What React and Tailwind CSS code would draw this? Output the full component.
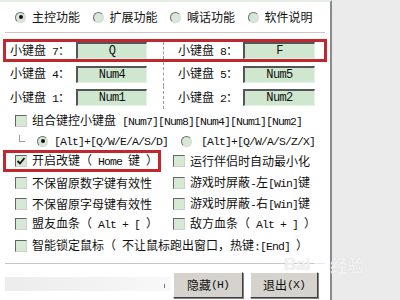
import React from 'react';

const M = ({ children }) => (
  <span className="font-['Liberation_Mono'] text-[11.5px] tracking-[-0.9px]">{children}</span>
);

const Radio = ({ on }) => (
  <span className="flex w-[11px] h-[11px] shrink-0 items-center justify-center rounded-full bg-[#d6e9d5] border border-t-[#6f6f6f] border-l-[#6f6f6f] border-r-[#d8d8d8] border-b-[#d8d8d8]">
    {on && <span className="w-[4px] h-[4px] rounded-full bg-[#111]" />}
  </span>
);

const Check = ({ on }) => (
  <span className="flex w-[12px] h-[12px] shrink-0 items-center justify-center bg-[#d6e9d4] border border-t-[#646464] border-l-[#646464] border-r-[#cfcfcf] border-b-[#cfcfcf]">
    {on && (
      <svg width="10" height="10" viewBox="0 0 10 10">
        <path d="M1.5 5 L4 7.5 L8.5 2" fill="none" stroke="#111" strokeWidth="1.8" />
      </svg>
    )}
  </span>
);

const Field = ({ value, w }) => (
  <div className={`${w} h-[17px] flex items-center justify-center bg-[#cfe6cf] border-t-2 border-l-2 border-t-[#555] border-l-[#555] border-r border-b border-r-[#e6f1e6] border-b-[#e6f1e6]`}>
    <span className="font-['Liberation_Mono'] text-[12px] tracking-[-0.6px]">{value}</span>
  </div>
);

const KeyCells = ({ l, lv, r, rv }) => (
  <>
    <div className="w-[157px] pl-[4px] flex items-center">
      <span className="w-[66px]">小键盘<M> {l}</M>：</span>
      <Field value={lv} w="w-[71px]" />
    </div>
    <div className="flex-1 h-full pl-[14px] flex items-center border-l border-dashed border-[#9c9c9c]">
      <span className="w-[65px]">小键盘<M> {r}</M>：</span>
      <Field value={rv} w="w-[72px]" />
    </div>
  </>
);

const Opt = ({ on, children }) => (
  <div className="flex items-center gap-[5px]">
    <Check on={on} />
    <span className="whitespace-nowrap">{children}</span>
  </div>
);

const Row2 = ({ h, red, left, right }) => (
  <div className={`flex mx-[3px] ${h}`}>
    <div className={`w-[158px] pl-[9px] flex items-center border-[3px] ${red ? 'border-[#c1272d]' : 'border-transparent'}`}>
      {left}
    </div>
    <div className="pl-[12px] flex items-center">{right}</div>
  </div>
);

export default function App() {
  const tabs = [
    ['主控功能', true],
    ['扩展功能', false],
    ['喊话功能', false],
    ['软件说明', false],
  ];

  return (
    <div className="w-[400px] h-[300px] flex overflow-hidden bg-[#ebebeb] text-[12px] leading-none text-[#111] font-['Noto_Sans_CJK_SC',sans-serif] relative">
      <div className="w-[332px] h-full bg-white border-r-2 border-[#8a8a8a] flex flex-col border-t-2 border-t-[#e3ede3]">
        {/* tabs */}
        <div className="h-[30px] pl-[15px] flex items-center">
          {tabs.map(([t, on]) => (
            <div key={t} className="w-[77.5px] flex items-center gap-[6px]">
              <Radio on={on} />
              <span>{t}</span>
            </div>
          ))}
        </div>
        <div className="h-px mx-[5px] bg-[#c6c6c6]" />

        {/* keypad */}
        <div className="mt-[6px] mx-[3px] h-[23px] flex items-center border-[3px] border-[#c1272d]">
          <KeyCells l="7" lv="Q" r="8" rv="F" />
        </div>
        <div className="mx-[3px] px-[3px] h-[24px] flex items-center">
          <KeyCells l="4" lv="Num4" r="5" rv="Num5" />
        </div>
        <div className="mx-[3px] px-[3px] h-[23px] flex items-center">
          <KeyCells l="1" lv="Num1" r="2" rv="Num2" />
        </div>

        {/* combo */}
        <div className="h-[24px] pl-[15px] flex items-center">
          <Opt>
            组合键控小键盘<M> [Num7][Num8][Num4][Num1][Num2]</M>
          </Opt>
        </div>
        <div className="h-[16px] pl-[19px] flex items-center">
          <span className="w-[6px] h-[7px] mb-[6px] border-l border-b border-[#9a9a9a]" />
          <span className="ml-[12px]"><Radio on /></span>
          <span className="ml-[6px]"><M>[Alt]+[Q/W/E/A/S/D]</M></span>
          <span className="ml-[13px]"><Radio /></span>
          <span className="ml-[9px]"><M>[Alt]+[Q/W/A/S/Z/X]</M></span>
        </div>

        <div className="mt-[1px]" />
        <Row2
          h="h-[22px]"
          red
          left={<Opt on>开启改键（<M> Home </M>键<M> </M>）</Opt>}
          right={<Opt>运行伴侣时自动最小化</Opt>}
        />
        <Row2
          h="h-[22px]"
          left={<Opt>不保留原数字键有效性</Opt>}
          right={<Opt>游戏时屏蔽<M>-</M>左<M>[Win]</M>键</Opt>}
        />
        <Row2
          h="h-[20px]"
          left={<Opt>不保留原字母键有效性</Opt>}
          right={<Opt>游戏时屏蔽<M>-</M>右<M>[Win]</M>键</Opt>}
        />
        <Row2
          h="h-[20px]"
          left={<Opt>盟友血条（<M> Alt + [ </M>）</Opt>}
          right={<Opt>敌方血条（<M> Alt + ] </M>）</Opt>}
        />
        <div className="h-[23px] pl-[15px] flex items-center">
          <Opt>智能锁定鼠标（<M> </M>不让鼠标跑出窗口，热键<M>:[End] </M>）</Opt>
        </div>

        <div className="mt-[6px] h-px mx-[5px] bg-[#c6c6c6]" />

        {/* bottom */}
        <div className="flex items-start pl-[5px] mt-[8px]">
          <div className="w-[165px] h-[14px] mt-[5px] bg-gradient-to-r from-[#ececec] to-[#f8f8f8] flex items-end justify-end pr-[5px]">
            <span className="w-px h-[4px] mb-[3px] bg-[#777]" />
          </div>
          <button className="ml-[3px] w-[70px] h-[26px] bg-[#d6d3ce] border border-t-white border-l-white border-r-[#404040] border-b-[#404040] shadow-[1px_1px_0_#808080] flex items-center justify-center">
            隐藏<M>(H)</M>
          </button>
          <button className="ml-[7px] w-[68px] h-[26px] bg-[#d6d3ce] border border-t-white border-l-white border-r-[#404040] border-b-[#404040] shadow-[1px_1px_0_#808080] flex items-center justify-center">
            退出<M>(X)</M>
          </button>
        </div>
      </div>
      <div className="flex-1" />

      {/* watermark */}
      <div className="absolute left-[284px] top-[256px] flex items-end gap-[4px] text-[17px] font-bold text-white/70 [text-shadow:0_0_1px_#cfcfcf] pointer-events-none">
        <span className="font-['Liberation_Sans']">Bai</span>
        <span className="w-[12px] h-[12px] rounded-full bg-white/60 mb-[3px]" />
        <span>经验</span>
      </div>
    </div>
  );
}
